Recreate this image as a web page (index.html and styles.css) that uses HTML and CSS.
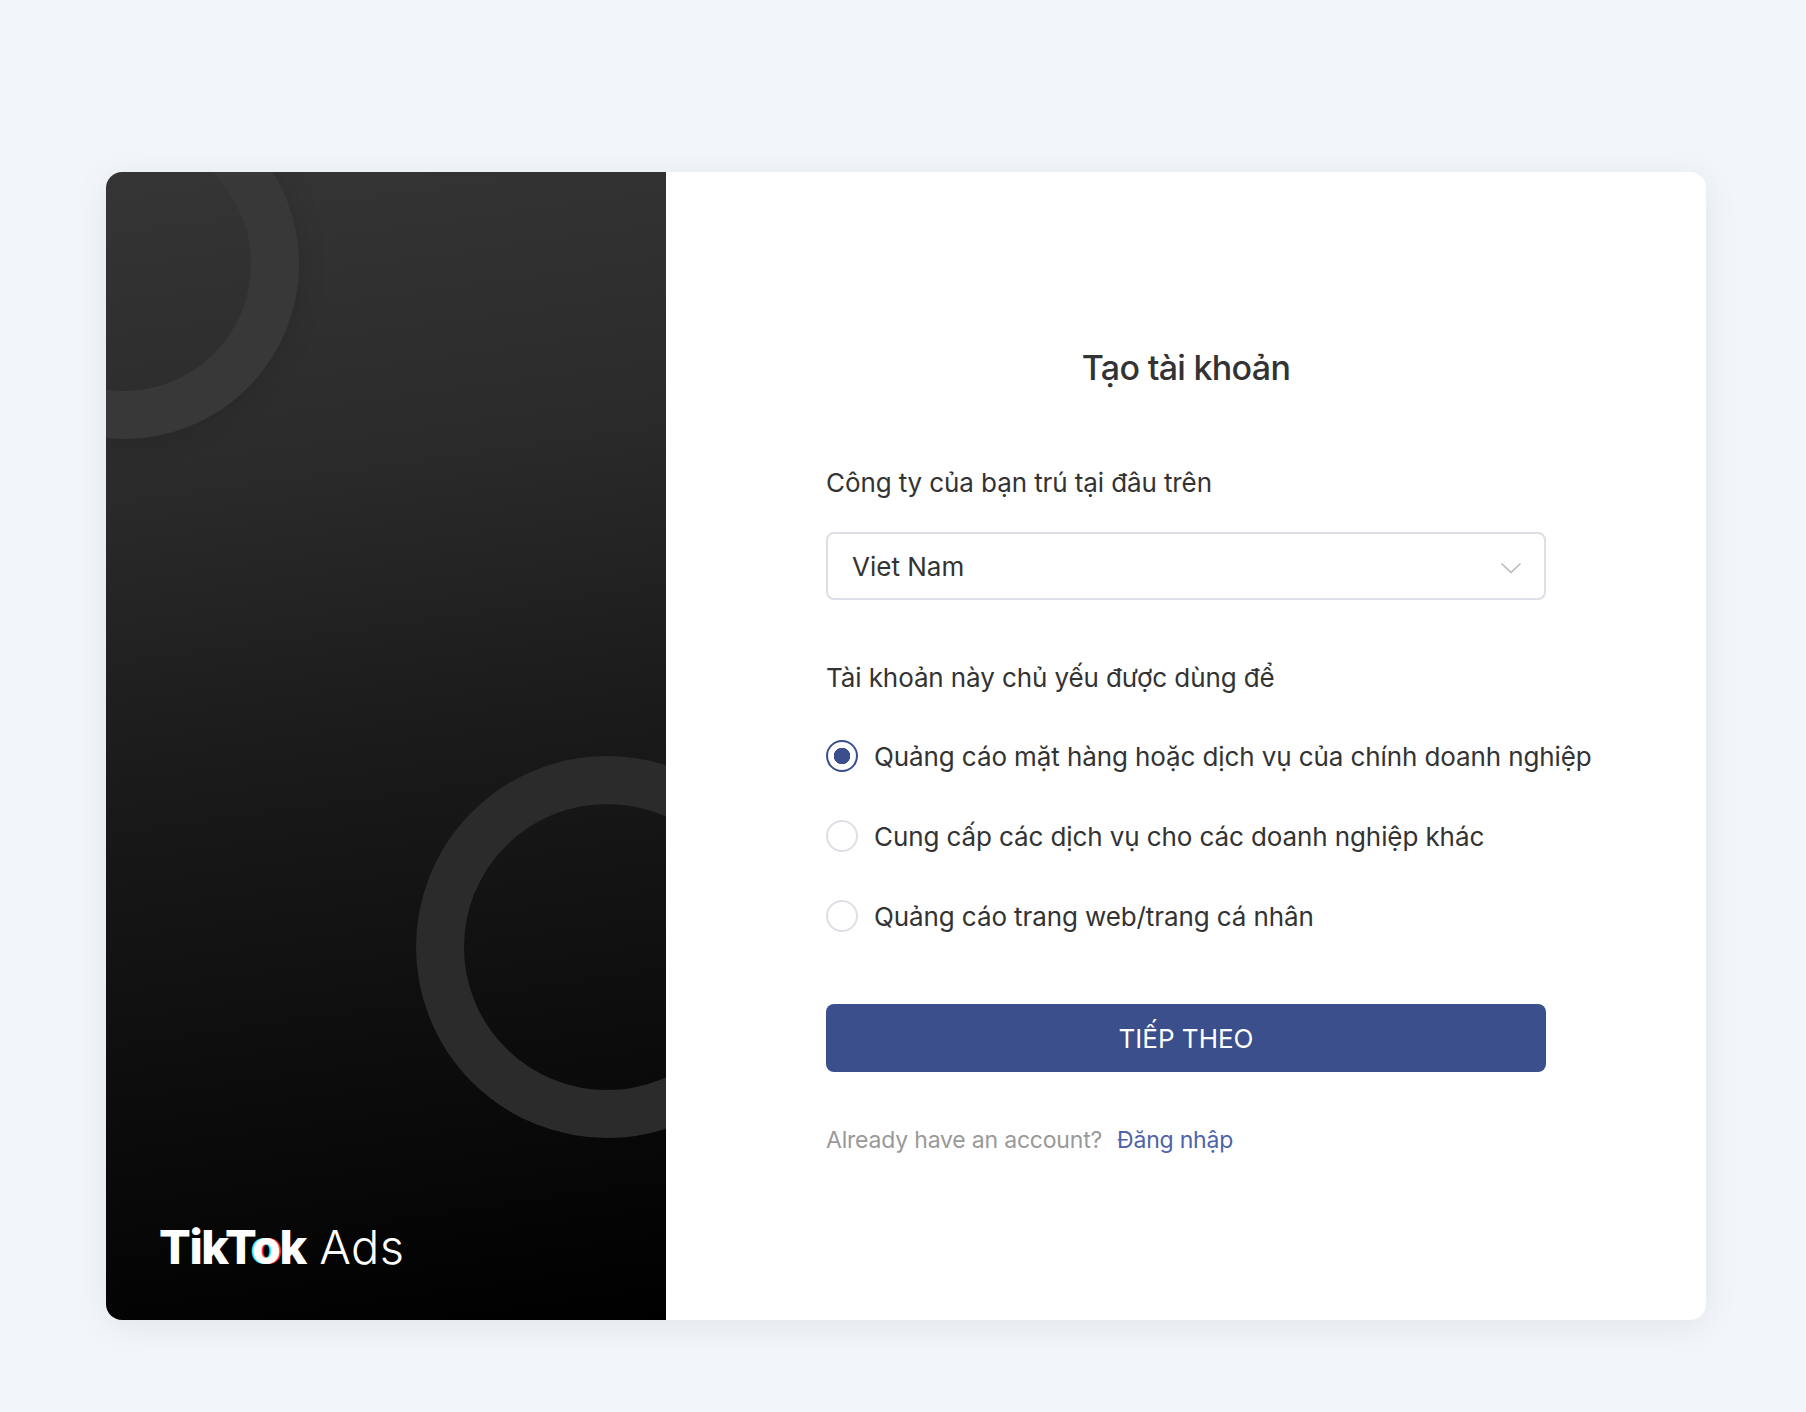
FILE: index.html
```html
<!DOCTYPE html>
<html lang="vi">
<head>
<meta charset="utf-8">
<title>TikTok Ads</title>
<link rel="stylesheet" href="styles.css">
</head>
<body>
<main class="card">
  <aside class="brand">
    <div class="ring ring-top"></div>
    <div class="ring ring-bottom"></div>
    <div class="logo"><span class="logo-main">TikT<span class="logo-o">o</span>k</span> <span class="logo-ads">Ads</span></div>
  </aside>
  <section class="form">
    <h1 class="title">Tạo tài khoản</h1>
    <div class="label label-first">Công ty của bạn trú tại đâu trên</div>
    <div class="select">
      <span>Viet Nam</span>
      <svg class="chevron" width="22" height="12" viewBox="0 0 22 12" fill="none"><path d="M1.5 1.5L11 10.5L20.5 1.5" stroke="#b4b8be" stroke-width="1.5"/></svg>
    </div>
    <div class="label label-second">Tài khoản này chủ yếu được dùng để</div>
    <div class="options">
      <div class="option"><span class="radio radio-on"></span><span class="option-text">Quảng cáo mặt hàng hoặc dịch vụ của chính doanh nghiệp</span></div>
      <div class="option"><span class="radio"></span><span class="option-text">Cung cấp các dịch vụ cho các doanh nghiệp khác</span></div>
      <div class="option"><span class="radio"></span><span class="option-text">Quảng cáo trang web/trang cá nhân</span></div>
    </div>
    <div class="button">TIẾP THEO</div>
    <div class="signin"><span class="signin-q">Already have an account?</span><span class="signin-link">Đăng nhập</span></div>
  </section>
</main>
</body>
</html>
```

FILE: styles.css
```css
* { box-sizing: border-box; }
html, body { margin: 0; height: 100%; }
body {
  background: #f2f6fb;
  font-family: Inter, "Noto Sans", sans-serif;
  color: #333;
  padding: 172px 100px 92px 106px;
  overflow: hidden;
}
.card {
  width: 1600px;
  height: 1148px;
  display: flex;
  background: #fff;
  border-radius: 16px;
  box-shadow: 0 6px 36px rgba(0, 0, 0, 0.07);
  overflow: hidden;
}
.brand {
  position: relative;
  width: 560px;
  flex: none;
  overflow: hidden;
  background: linear-gradient(172deg, #353535 0%, #2a2a2a 27%, #1a1a1a 50%, #000 100%);
  display: flex;
  align-items: flex-end;
  padding: 0 0 45px 53px;
}
.ring {
  position: absolute;
  border-radius: 50%;
  border-style: solid;
}
.ring-top {
  left: -157px;
  top: -83px;
  width: 350px;
  height: 350px;
  border-width: 48px;
  border-color: #383838;
  box-shadow: 0 0 30px rgba(0, 0, 0, 0.12);
}
.ring-bottom {
  left: 310px;
  top: 584px;
  width: 382px;
  height: 382px;
  border-width: 48px;
  border-color: #2b2b2b;
}
.logo {
  position: relative;
  color: #fff;
  font-size: 47px;
  line-height: 56px;
  white-space: nowrap;
}
.logo-main { font-weight: 800; letter-spacing: -1.4px; }
.logo-o { text-shadow: -1.5px 0 #25f4ee, 1.5px 0 #fe2c55; }
.logo-ads { font-weight: 300; letter-spacing: 0.4px; }
.form {
  flex: none;
  width: 1040px;
  min-width: 0;
  padding: 176px 160px 0 160px;
}
.title {
  margin: 0;
  font-size: 34px;
  line-height: 40px;
  font-weight: 500;
  text-align: center;
  letter-spacing: -0.7px;
  color: #333;
}
.label {
  font-size: 26px;
  line-height: 32px;
  letter-spacing: -0.1px;
  color: #333;
  white-space: nowrap;
}
.label-first { margin-top: 79px; }
.label-second { margin-top: 62px; }
.select {
  margin-top: 33px;
  height: 68px;
  border: 2px solid #dcdfe6;
  border-radius: 8px;
  padding: 0 24px;
  display: flex;
  align-items: center;
  justify-content: space-between;
  font-size: 26px;
  color: #333;
}
.chevron { margin-right: -2px; margin-top: 3px; }
.options {
  margin-top: 46px;
  display: flex;
  flex-direction: column;
  gap: 48px;
}
.option {
  display: flex;
  align-items: center;
  height: 32px;
  white-space: nowrap;
  font-size: 26px;
  letter-spacing: -0.1px;
  color: #333;
}
.radio {
  flex: none;
  width: 32px;
  height: 32px;
  border-radius: 50%;
  border: 2px solid #dcdfe6;
  margin-right: 16px;
}
.radio-on {
  border-color: #3a4f8c;
  background: radial-gradient(circle, #3a4f8c 0 8px, transparent 8.5px);
}
.button {
  margin-top: 72px;
  height: 68px;
  background: #3a4f8c;
  border-radius: 8px;
  color: #fff;
  font-size: 26px;
  display: flex;
  align-items: center;
  justify-content: center;
}
.signin {
  margin-top: 52px;
  font-size: 23px;
  line-height: 32px;
  letter-spacing: -0.2px;
  white-space: nowrap;
}
.signin-q { color: #999; margin-right: 15px; }
.signin-link { color: #4d62ab; }
```
